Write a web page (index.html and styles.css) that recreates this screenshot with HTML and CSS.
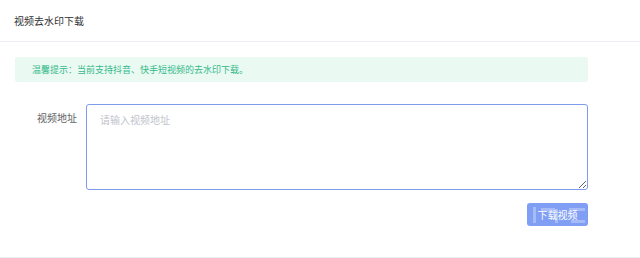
FILE: index.html
```html
<!DOCTYPE html>
<html lang="zh">
<head>
<meta charset="utf-8">
<link rel="stylesheet" href="styles.css">
</head>
<body>
<div class="card">
  <div class="card-header">视频去水印下载</div>
  <div class="card-body">
    <div class="alert">温馨提示：当前支持抖音、快手短视频的去水印下载。</div>
    <div class="form-row">
      <label class="label">视频地址</label>
      <textarea class="input" placeholder="请输入视频地址"></textarea>
    </div>
    <div class="actions">
      <button class="btn">下载视频</button>
    </div>
  </div>
</div>
</body>
</html>
```
FILE: styles.css
```css
* { box-sizing: border-box; }
html, body { margin: 0; padding: 0; background: #fff; }
body {
  font-family: "Noto Sans CJK SC", "Liberation Sans", sans-serif;
  width: 640px;
  height: 258px;
  overflow: hidden;
}
.card {
  height: 258px;
  border-bottom: 1px solid #ebeef5;
}
.card-header {
  height: 42px;
  padding: 0 0 0 14px;
  display: flex;
  align-items: center;
  font-size: 10px;
  color: #303133;
  border-bottom: 1px solid #ebeef5;
}
.card-body {
  padding: 15px 52px 0 15px;
}
.alert {
  height: 25px;
  background: #ebf9f3;
  color: #33b98a;
  font-size: 9px;
  display: flex;
  align-items: center;
  padding-left: 17px;
  border-radius: 2px;
}
.form-row {
  display: flex;
  margin-top: 22px;
}
.label {
  width: 71px;
  padding-right: 9px;
  text-align: right;
  font-size: 10px;
  color: #606266;
  line-height: 14px;
  padding-top: 7px;
}
.input {
  flex: 1;
  height: 86px;
  border: 1px solid #7f9cec;
  border-radius: 3px;
  padding: 8px 13px;
  font-family: inherit;
  font-size: 10px;
  line-height: 14px;
  resize: vertical;
  outline: none;
  margin: 0;
}
.input::placeholder { color: #c0c4cc; }
.actions {
  display: flex;
  justify-content: flex-end;
  margin-top: 13px;
}
.btn {
  width: 61px;
  height: 23px;
  border: none;
  border-radius: 3px;
  background-color: #7f9ef4;
  background-image:
    linear-gradient(#a6bcf8, #a6bcf8),
    linear-gradient(#a6bcf8, #a6bcf8),
    linear-gradient(#a6bcf8, #a6bcf8),
    linear-gradient(#a6bcf8, #a6bcf8),
    linear-gradient(#a6bcf8, #a6bcf8);
  background-size: 3px 16px, 14px 3px, 3px 14px, 16px 3px, 14px 3px;
  background-position: 6px 4px, 14px 5px, 28px 6px, 42px 5px, 44px 17px;
  background-repeat: no-repeat;
  color: #fff;
  font-family: inherit;
  font-size: 10px;
  padding: 0;
}
```
